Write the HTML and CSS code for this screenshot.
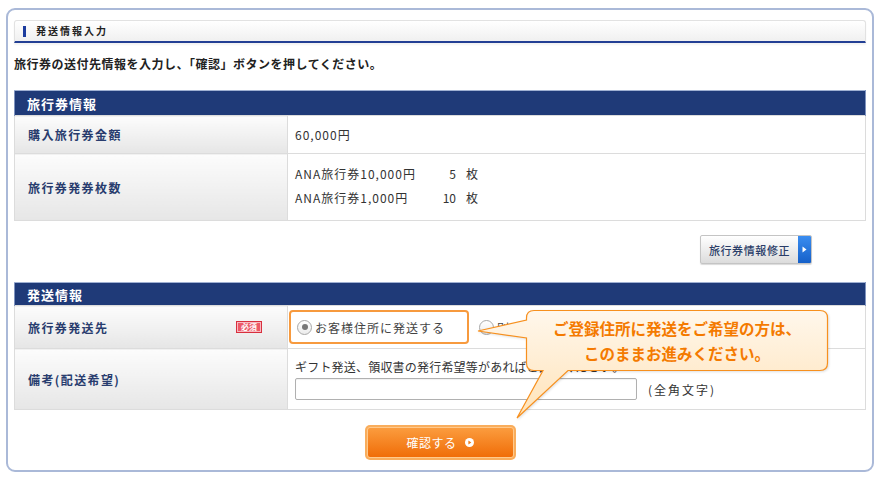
FILE: index.html
```html
<!DOCTYPE html>
<html lang="ja">
<head>
<meta charset="utf-8">
<title>発送情報入力</title>
<link rel="stylesheet" href="styles.css">
</head>
<body>
<div class="frame">
  <div class="sec-head"><span class="marker"></span><span class="sec-title">発送情報入力</span></div>
  <p class="lead">旅行券の送付先情報を入力し、「確認」ボタンを押してください。</p>

  <table class="tbl">
    <tr><th colspan="2" class="tbl-head">旅行券情報</th></tr>
    <tr class="r1">
      <td class="lbl">購入旅行券金額</td>
      <td class="val">60,000円</td>
    </tr>
    <tr class="r2">
      <td class="lbl">旅行券発券枚数</td>
      <td class="val">
        <div class="qty-grid">
          <span>ANA旅行券10,000円</span><span class="num">5</span><span>枚</span>
          <span>ANA旅行券1,000円</span><span class="num">10</span><span>枚</span>
        </div>
      </td>
    </tr>
  </table>

  <div class="edit-row">
    <a class="edit-btn"><span class="edit-text">旅行券情報修正</span><span class="edit-arrow"><svg width="5" height="7" viewBox="0 0 5 7"><path d="M0.5 0.5 L4.5 3.5 L0.5 6.5 Z" fill="#fff"/></svg></span></a>
  </div>

  <table class="tbl tbl2">
    <tr><th colspan="2" class="tbl-head">発送情報</th></tr>
    <tr class="r3">
      <td class="lbl"><div class="lbl-flex"><span>旅行券発送先</span><span class="req">必須</span></div></td>
      <td class="val val-radio">
        <div class="radios">
          <label class="opt opt-on"><span class="radio on"></span><span class="opt-text">お客様住所に発送する</span></label>
          <label class="opt opt-off"><span class="radio"></span><span class="opt-text">別の住所に発送する</span></label>
        </div>
      </td>
    </tr>
    <tr class="r4">
      <td class="lbl">備考(配送希望)</td>
      <td class="val val-note">
        <div class="note">ギフト発送、領収書の発行希望等があればご記入ください。</div>
        <div class="input-row"><span class="input"></span><span class="hint">(全角文字)</span></div>
      </td>
    </tr>
  </table>

  <div class="confirm-row">
    <a class="confirm"><span class="confirm-inner">確認する<svg class="go" width="9" height="9" viewBox="0 0 9 9"><circle cx="4.5" cy="4.5" r="4.5" fill="#fff"/><path d="M3.4 2.4 L6.3 4.5 L3.4 6.6 Z" fill="#f27a14"/></svg></span></a>
  </div>
</div>

<svg class="bubble" width="370" height="125" viewBox="0 0 370 125">
  <defs>
    <linearGradient id="bg" x1="0" y1="0" x2="0" y2="1">
      <stop offset="0" stop-color="#fff7ec"/>
      <stop offset="1" stop-color="#ffe3b8"/>
    </linearGradient>
  </defs>
  <path d="M64 10.5 H350 Q357.5 10.5 357.5 18 V63 Q357.5 70.5 350 70.5 H98 L47 118 L73 70.5 H64 Q56.5 70.5 56.5 63 V38 L8 31 L56.5 20 V18 Q56.5 10.5 64 10.5 Z" fill="url(#bg)" stroke="#f7901e" stroke-width="1.2"/>
</svg>
<div class="bubble-text">ご登録住所に発送をご希望の方は、<br>このままお進みください。</div>
</body>
</html>
```

FILE: styles.css
```css
* { box-sizing: border-box; }
html, body { margin: 0; padding: 0; background: #fff; }
body {
  font-family: "Noto Sans CJK JP", "Noto Sans", sans-serif;
  color: #333;
  width: 880px;
  height: 478px;
  padding: 8px 6px 6px 6px;
}
.frame {
  border: 2px solid #aab9d8;
  border-radius: 9px;
  height: 464px;
  padding: 10px 6px 0 6px;
}
.sec-head {
  height: 23px;
  display: flex;
  align-items: center;
  border: 1px solid #e2e2e2;
  border-bottom: 2px solid #233f94;
  border-radius: 3px 3px 0 0;
  background: linear-gradient(#ffffff, #f0f0f0);
  padding-left: 8px;
  box-shadow: 0 2px 2px rgba(0,0,0,0.05);
}
.marker {
  width: 3px;
  height: 11px;
  background: #1c3c9e;
  margin-right: 10px;
}
.sec-title {
  font-size: 10px;
  font-weight: bold;
  color: #222;
  letter-spacing: 2px;
  line-height: 1;
}
.lead {
  margin: 12px 0 0 0;
  font-size: 12px;
  line-height: 18px;
  font-weight: bold;
  color: #222;
  letter-spacing: 0.5px;
}
.tbl {
  width: 852px;
  border-collapse: collapse;
  margin-top: 17px;
}
.tbl2 { margin-top: 18px; }
.tbl-head {
  height: 25px;
  background: #1f3a78;
  border-top: 1px solid #9fb0d2;
  border-left: 1px solid #7f93bf;
  border-right: 1px solid #7f93bf;
  color: #fff;
  font-size: 13px;
  font-weight: bold;
  letter-spacing: 1px;
  text-align: left;
  padding: 0 0 0 12px;
  line-height: 1;
}
.tbl2 .tbl-head { height: 23px; }
.tbl td {
  border: 1px solid #dcdcdc;
  padding: 0;
}
.lbl {
  width: 273px;
  background: linear-gradient(#fcfcfc, #e6e6e6);
  color: #283c6e;
  font-size: 12px;
  font-weight: bold;
  letter-spacing: 1.4px;
  padding-left: 13px !important;
  vertical-align: middle;
}
.val {
  background: #fff;
  font-size: 12px;
  letter-spacing: 1px;
  color: #333;
  padding-left: 7px !important;
  vertical-align: middle;
}
.r1 td { height: 38px; }
.r2 td { height: 67px; }
.r3 td { height: 43px; }
.r4 td { height: 61px; }
.qty-grid {
  display: grid;
  grid-template-columns: 130px 21px auto;
  column-gap: 10px;
  row-gap: 0;
  line-height: 24px;
  justify-content: start;
  margin-top: -2px;
}
.qty-grid .num { text-align: right; letter-spacing: 0; }
.edit-row {
  display: flex;
  justify-content: flex-end;
  padding-right: 54px;
  margin-top: 14px;
}
.edit-btn {
  display: flex;
  height: 29px;
  width: 112px;
  border: 1px solid #c4c4c4;
  border-radius: 2px;
  background: linear-gradient(#ffffff, #dcdcdc);
  box-shadow: 0 1px 1px rgba(0,0,0,0.15);
}
.edit-text {
  flex: 1;
  display: flex;
  align-items: center;
  justify-content: center;
  font-size: 11px;
  letter-spacing: 0.6px;
  color: #2a3d68;
  font-weight: 500;
}
.edit-arrow {
  width: 13px;
  background: linear-gradient(#3a8df0, #1560c9);
  display: flex;
  align-items: center;
  justify-content: center;
  border-radius: 0 1px 1px 0;
}
.lbl-flex {
  display: flex;
  justify-content: space-between;
  align-items: center;
  padding-right: 25px;
}
.req {
  font-size: 8px;
  font-weight: bold;
  letter-spacing: 0;
  color: #fff;
  background: #ec5a68;
  border: 1px solid #d8303e;
  box-shadow: inset 0 0 0 1px #f8b8c0;
  padding: 0 3px;
  height: 12px;
  line-height: 10px;
  width: 26px;
  text-align: center;
}
.val-radio { padding-left: 1px !important; }
.radios {
  display: flex;
  align-items: center;
  gap: 10px;
}
.opt {
  display: flex;
  align-items: center;
  height: 34px;
  padding-left: 6px;
}
.opt-off { padding-left: 0; }
.opt-on {
  width: 180px;
  border: 2px solid #f79a3e;
  border-radius: 4px;
}
.radio {
  width: 15px;
  height: 15px;
  border-radius: 50%;
  border: 1px solid #a8a8a8;
  background: linear-gradient(#ffffff, #ececec);
  display: flex;
  align-items: center;
  justify-content: center;
  margin-right: 3px;
}
.radio.on::after {
  content: "";
  width: 6px;
  height: 6px;
  border-radius: 50%;
  background: #777;
}
.opt-text {
  font-size: 12px;
  letter-spacing: 1px;
  color: #444;
}
.val-note { vertical-align: top !important; }
.note {
  font-size: 12px;
  letter-spacing: 0.2px;
  line-height: 16px;
  margin-top: 10px;
  color: #333;
}
.input-row {
  display: flex;
  align-items: center;
  margin-top: 3px;
}
.input {
  width: 342px;
  height: 22px;
  border: 1px solid #b0b0b0;
  border-radius: 2px;
  background: #fff;
  box-shadow: inset 0 1px 1px rgba(0,0,0,0.06);
}
.hint {
  margin-left: 11px;
  font-size: 12px;
  letter-spacing: 2px;
  color: #333;
}
.confirm-row {
  display: flex;
  justify-content: center;
  margin-top: 15px;
}
.confirm {
  display: block;
  width: 151px;
  height: 35px;
  padding: 2px;
  border-radius: 5px;
  background: #f9ad5c;
}
.confirm-inner {
  display: flex;
  align-items: center;
  justify-content: center;
  height: 100%;
  border-radius: 3px;
  border: 1px solid #ffc98c;
  background: linear-gradient(#fb9c3e, #f06d08);
  color: #fff;
  font-size: 12px;
  letter-spacing: 0.5px;
  gap: 8px;
}
.go { display: block; }
.bubble {
  position: absolute;
  left: 470px;
  top: 300px;
  filter: drop-shadow(1px 1px 1px rgba(0,0,0,0.12));
}
.bubble-text {
  position: absolute;
  left: 526px;
  top: 310px;
  width: 302px;
  height: 61px;
  display: flex;
  align-items: center;
  justify-content: center;
  text-align: center;
  color: #f47a00;
  font-size: 15.5px;
  font-weight: bold;
  line-height: 25px;
}
```
